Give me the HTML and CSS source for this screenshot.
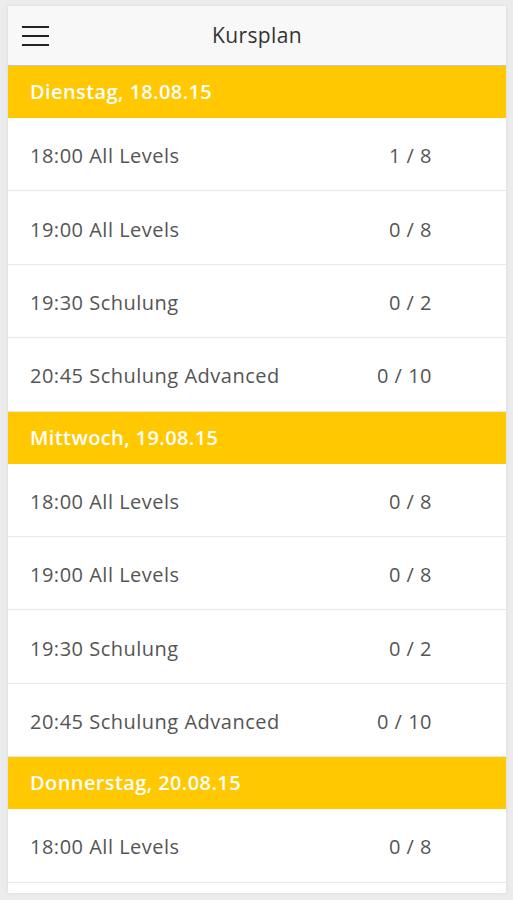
FILE: index.html
```html
<!DOCTYPE html>
<html lang="de">
<head>
    <meta charset="UTF-8">
    <meta name="viewport" content="width=device-width, initial-scale=1.0">
    <title>Kursplan</title>
    <link rel="stylesheet" href="styles.css">
</head>
<body>

    <div class="app">
        <div class="topbar">
            <button class="menu-btn" aria-label="Menü">
                <svg width="28" height="20" viewBox="0 0 28 20">
                    <rect x="0" y="0" width="27" height="2" fill="#222"/>
                    <rect x="0" y="9" width="27" height="2" fill="#222"/>
                    <rect x="0" y="18" width="27" height="2" fill="#222"/>
                </svg>
            </button>
            <h1 class="title">Kursplan</h1>
        </div>

        <div class="day">Dienstag, 18.08.15</div>
        <div class="course"><span>18:00 All Levels</span><span class="count">1 / 8</span></div>
        <div class="course"><span>19:00 All Levels</span><span class="count">0 / 8</span></div>
        <div class="course"><span>19:30 Schulung</span><span class="count">0 / 2</span></div>
        <div class="course"><span>20:45 Schulung Advanced</span><span class="count">0 / 10</span></div>

        <div class="day">Mittwoch, 19.08.15</div>
        <div class="course"><span>18:00 All Levels</span><span class="count">0 / 8</span></div>
        <div class="course"><span>19:00 All Levels</span><span class="count">0 / 8</span></div>
        <div class="course"><span>19:30 Schulung</span><span class="count">0 / 2</span></div>
        <div class="course"><span>20:45 Schulung Advanced</span><span class="count">0 / 10</span></div>

        <div class="day">Donnerstag, 20.08.15</div>
        <div class="course"><span>18:00 All Levels</span><span class="count">0 / 8</span></div>
        <div class="course"></div>
    </div>

</body>
</html>
```

FILE: styles.css
```css
html, body {
    margin: 0;
    height: 100%;
    overflow: hidden;
}
body {
    background-color: #ececec;
    font-family: "Open Sans", "Noto Sans", sans-serif;
}
.app {
    margin: 6px 7px 0 8px;
    height: 887px;
    overflow: hidden;
    background-color: #fff;
    box-shadow: 0 0 4px rgba(0, 0, 0, 0.08);
}
.topbar {
    position: relative;
    height: 60px;
    box-sizing: border-box;
    background-color: #f8f8f8;
    border-bottom: 1px solid #c4c4c4;
    display: flex;
    align-items: center;
    justify-content: center;
}
.menu-btn {
    position: absolute;
    left: 14px;
    top: 20px;
    padding: 0;
    border: 0;
    background: none;
    line-height: 0;
}
.title {
    margin: 0 0 2px;
    font-size: 21px;
    font-weight: 400;
    letter-spacing: 0.4px;
    color: #333;
}
.day {
    height: 52px;
    line-height: 52px;
    padding-left: 22px;
    background-color: #ffc800;
    color: #fff;
    font-size: 20px;
    font-weight: 600;
    letter-spacing: 0.4px;
}
.course {
    height: 73.4px;
    box-sizing: border-box;
    padding: 3px 74px 0 22px;
    border-bottom: 1px solid #e8e8e8;
    display: flex;
    align-items: center;
    justify-content: space-between;
    color: #555;
    font-size: 20px;
    letter-spacing: 0.5px;
}
.count {
    text-align: right;
}
```
